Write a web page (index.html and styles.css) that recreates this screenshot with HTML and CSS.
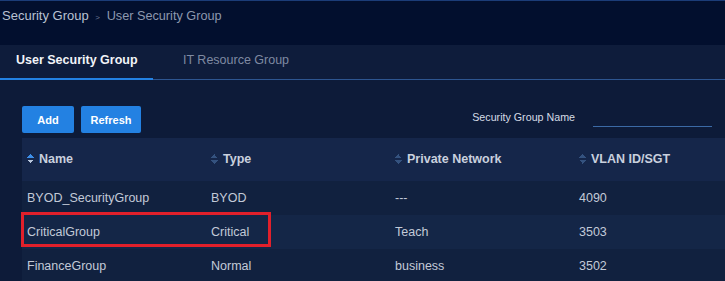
FILE: index.html
```html
<!DOCTYPE html>
<html lang="en">
<head>
    <meta charset="utf-8" />
    <link rel="stylesheet" href="styles.css">
</head>
<body>
    <div class="page">
        <div class="crumbs">
            <span class="crumb-root">Security Group</span>
            <span class="crumb-sep">&gt;</span>
            <span class="crumb-current">User Security Group</span>
        </div>
        <div class="tabs">
            <div class="tab active">User Security Group</div>
            <div class="tab">IT Resource Group</div>
        </div>
        <div class="content">
            <div class="toolbar">
                <button class="btn">Add</button>
                <button class="btn">Refresh</button>
                <div class="search">
                    <label>Security Group Name</label>
                    <input type="text" class="search-input">
                </div>
            </div>
            <table class="grid">
                <thead>
                    <tr>
                        <th><span class="sort on"></span>Name</th>
                        <th><span class="sort"></span>Type</th>
                        <th><span class="sort"></span>Private Network</th>
                        <th><span class="sort"></span>VLAN ID/SGT</th>
                    </tr>
                </thead>
                <tbody>
                    <tr>
                        <td>BYOD_SecurityGroup</td>
                        <td>BYOD</td>
                        <td>---</td>
                        <td>4090</td>
                    </tr>
                    <tr class="alt">
                        <td>CriticalGroup</td>
                        <td>Critical</td>
                        <td>Teach</td>
                        <td>3503</td>
                    </tr>
                    <tr>
                        <td>FinanceGroup</td>
                        <td>Normal</td>
                        <td>business</td>
                        <td>3502</td>
                    </tr>
                </tbody>
            </table>
            <div class="mark"></div>
        </div>
    </div>
</body>
</html>
```

FILE: styles.css
```css
:root {
    --top-bg: #020f2e;
    --tab-bg: #0e1c3b;
    --content-bg: #0d1b39;
    --head-bg: #15264a;
    --row-bg: #11213f;
    --row-alt: #142647;
    --text: #c3cad8;
    --blue: #2381e2;
}

body {
    margin: 0;
    background-color: var(--content-bg);
    font-family: 'Liberation Sans', Arial, sans-serif;
    overflow: hidden;
}

.page {
    width: 725px;
    height: 281px;
    border-top: 1px solid #1b3c78;
    box-sizing: border-box;
    position: relative;
}

.crumbs {
    height: 44px;
    background-color: var(--top-bg);
    padding: 7px 0 0 2px;
    box-sizing: border-box;
    font-size: 13px;
}

.crumb-root {
    color: #b9c2d3;
}

.crumb-sep {
    color: #6c7892;
    font-size: 8px;
    margin: 0 3px 0 3px;
}

.crumb-current {
    color: #8d98ae;
    font-size: 12.7px;
}

.tabs {
    height: 34px;
    background-color: var(--tab-bg);
    display: flex;
    border-bottom: 1px solid #2d5590;
}

.tab {
    width: 153px;
    font-size: 12.5px;
    color: #7f8aa2;
    padding-top: 8px;
    box-sizing: border-box;
    padding-left: 30px;
}

.tab.active {
    color: #f2f4f8;
    font-weight: bold;
    padding-left: 16px;
    border-bottom: 2px solid var(--blue);
    margin-bottom: -1px;
}

.content {
    padding: 26px 0 0 22px;
    position: relative;
}

.toolbar {
    display: flex;
    align-items: flex-start;
    height: 32px;
}

.btn {
    height: 27px;
    border: none;
    border-radius: 2px;
    background-color: var(--blue);
    color: #ffffff;
    font-family: inherit;
    font-size: 11px;
    font-weight: bold;
    padding: 0;
    margin-right: 7px;
    width: 52px;
}

.btn + .btn {
    width: 60px;
}

.search {
    margin-left: auto;
    display: flex;
    align-items: flex-start;
    padding-top: 5px;
}

.search label {
    color: #d5dbe6;
    font-size: 10.7px;
    margin-right: 18px;
}

.search-input {
    width: 119px;
    margin-right: 13px;
    margin-top: 3px;
    height: 12px;
    background: transparent;
    border: none;
    border-bottom: 1px solid #3b6aa6;
    padding: 0;
    outline: none;
}

.grid {
    border-collapse: collapse;
    width: 703px;
    table-layout: fixed;
    font-size: 12.5px;
}

.grid th {
    height: 42px;
    background-color: var(--head-bg);
    color: #c9d0de;
    text-align: left;
    font-weight: bold;
    padding: 0 0 1px 5px;
    width: 179px;
}

.grid th:last-child {
    width: auto;
}

.grid td {
    height: 34px;
    background-color: var(--row-bg);
    color: var(--text);
    padding: 0 0 0 5px;
}

.grid tr.alt td {
    background-color: var(--row-alt);
}

.sort {
    display: inline-block;
    width: 7px;
    height: 10px;
    margin-right: 5px;
    vertical-align: -1px;
    background:
        linear-gradient(to bottom right, transparent 50%, #34527f 50%) left top / 4px 4px no-repeat,
        linear-gradient(to bottom left, transparent 50%, #34527f 50%) right top / 4px 4px no-repeat,
        linear-gradient(to top right, transparent 50%, #34527f 50%) left bottom / 4px 4px no-repeat,
        linear-gradient(to top left, transparent 50%, #34527f 50%) right bottom / 4px 4px no-repeat;
}

.sort.on {
    background:
        linear-gradient(to bottom right, transparent 50%, #3d8ee8 50%) left top / 4px 4px no-repeat,
        linear-gradient(to bottom left, transparent 50%, #3d8ee8 50%) right top / 4px 4px no-repeat,
        linear-gradient(to top right, transparent 50%, #b8c6dc 50%) left bottom / 4px 4px no-repeat,
        linear-gradient(to top left, transparent 50%, #b8c6dc 50%) right bottom / 4px 4px no-repeat;
}

/* red highlight over the CriticalGroup row */
.mark {
    position: absolute;
    left: 21px;
    top: 132px;
    width: 250px;
    height: 35px;
    border: 3px solid #e1202b;
    box-sizing: border-box;
}
```
